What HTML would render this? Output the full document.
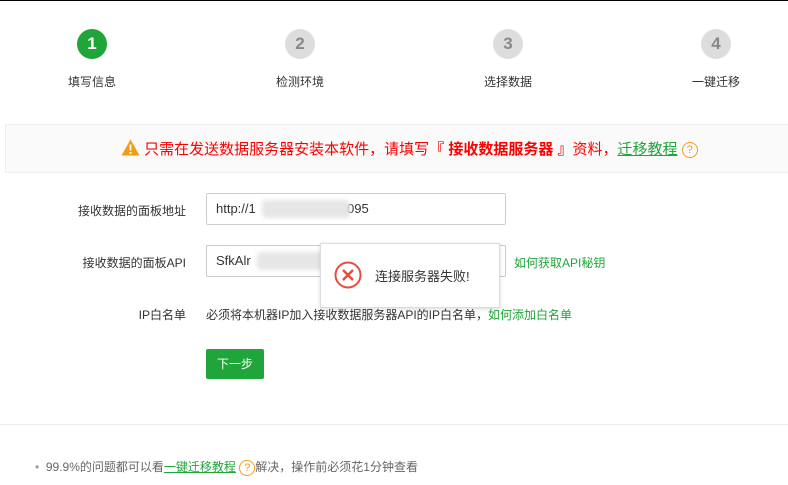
<!DOCTYPE html>
<html><head><meta charset="utf-8"><style>
*{margin:0;padding:0;box-sizing:border-box}
body{width:788px;height:485px;background:#fff;font-family:"Liberation Sans","Noto Sans CJK SC",sans-serif;font-size:12px;color:#333;position:relative;overflow:hidden;border-top:1px solid #000}
.a{position:absolute}
.c{width:30px;height:30px;border-radius:50%;background:#ddd;color:#888;font-weight:bold;font-size:17px;text-align:center;line-height:30px;top:28px}
.l{top:72px;width:100px;text-align:center;font-size:12px;color:#333}
.lab{width:120px;text-align:right;font-size:12px;color:#333;left:66px}
.inp{left:206px;width:300px;height:32px;border:1px solid #ccc;border-radius:2px;padding-left:9px;line-height:30px;font-size:13px;color:#333}
.blur{background:#e6e6e6;height:18px;top:6px;border-radius:4px;filter:blur(2px)}
.g{color:#20a53a}
.q{display:inline-block;width:16px;height:16px;border:1px solid #f39c12;border-radius:50%;color:#f39c12;font-size:11px;line-height:14px;text-align:center;vertical-align:middle}
</style></head><body>
<div class="a c" style="left:77px;background:#20a53a;color:#fff">1</div>
<div class="a c" style="left:285px">2</div>
<div class="a c" style="left:493px">3</div>
<div class="a c" style="left:701px">4</div>
<div class="a l" style="left:42px">填写信息</div>
<div class="a l" style="left:250px">检测环境</div>
<div class="a l" style="left:458px">选择数据</div>
<div class="a l" style="left:666px">一键迁移</div>

<div class="a" style="left:5px;top:123px;width:790px;height:49px;background:#fafafa;border:1px solid #eee"></div>
<div class="a" style="left:121px;top:138px;font-size:15px;color:#f00;white-space:nowrap;line-height:20px">
<svg width="19" height="17" viewBox="0 0 19 17" style="vertical-align:-2px"><path d="M9.5 0.5L18.5 16.5H0.5Z" fill="#f39c12"/><rect x="8.6" y="5.5" width="1.8" height="6" fill="#fff"/><rect x="8.6" y="13" width="1.8" height="1.8" fill="#fff"/></svg>
只需在发送数据服务器安装本软件，请填写<b>『 接收数据服务器 』</b>资料，<u class="g">迁移教程</u> <span class="q">?</span></div>

<div class="a lab" style="top:201px">接收数据的面板地址</div>
<div class="a inp" style="top:192px">http://1<span class="a blur" style="left:55px;width:88px"></span><span style="margin-left:84px">5095</span></div>
<div class="a lab" style="top:253px">接收数据的面板API</div>
<div class="a inp" style="top:244px">SfkAlr<span class="a blur" style="left:50px;width:70px"></span></div>
<div class="a g" style="left:514px;top:253px">如何获取API秘钥</div>
<div class="a lab" style="top:305px">IP白名单</div>
<div class="a" style="left:206px;top:305px">必须将本机器IP加入接收数据服务器API的IP白名单，<span class="g">如何添加白名单</span></div>

<div class="a" style="left:320px;top:242px;width:180px;height:65px;background:#fff;border:1px solid #ddd;box-shadow:0 1px 4px rgba(0,0,0,.15)">
<svg class="a" style="left:13px;top:17px" width="28" height="28" viewBox="0 0 28 28"><circle cx="14" cy="14" r="12.5" fill="none" stroke="#e74c3c" stroke-width="2"/><path d="M9 9L19 19M19 9L9 19" stroke="#e74c3c" stroke-width="2.4"/></svg>
<div class="a" style="left:54px;top:22px;font-size:13px;color:#333">连接服务器失败!</div></div>

<div class="a" style="left:206px;top:348px;width:58px;height:30px;background:#20a53a;color:#fff;border-radius:2px;text-align:center;line-height:30px;font-size:12px">下一步</div>

<div class="a" style="left:0;top:423px;width:788px;height:1px;background:#eee"></div>
<div class="a" style="left:35px;top:458px;color:#666;white-space:nowrap;line-height:16px"><span style="color:#999">•</span>&nbsp; 99.9%的问题都可以看<u class="g">一键迁移教程</u> <span class="q">?</span>解决，操作前必须花1分钟查看</div>
</body></html>
